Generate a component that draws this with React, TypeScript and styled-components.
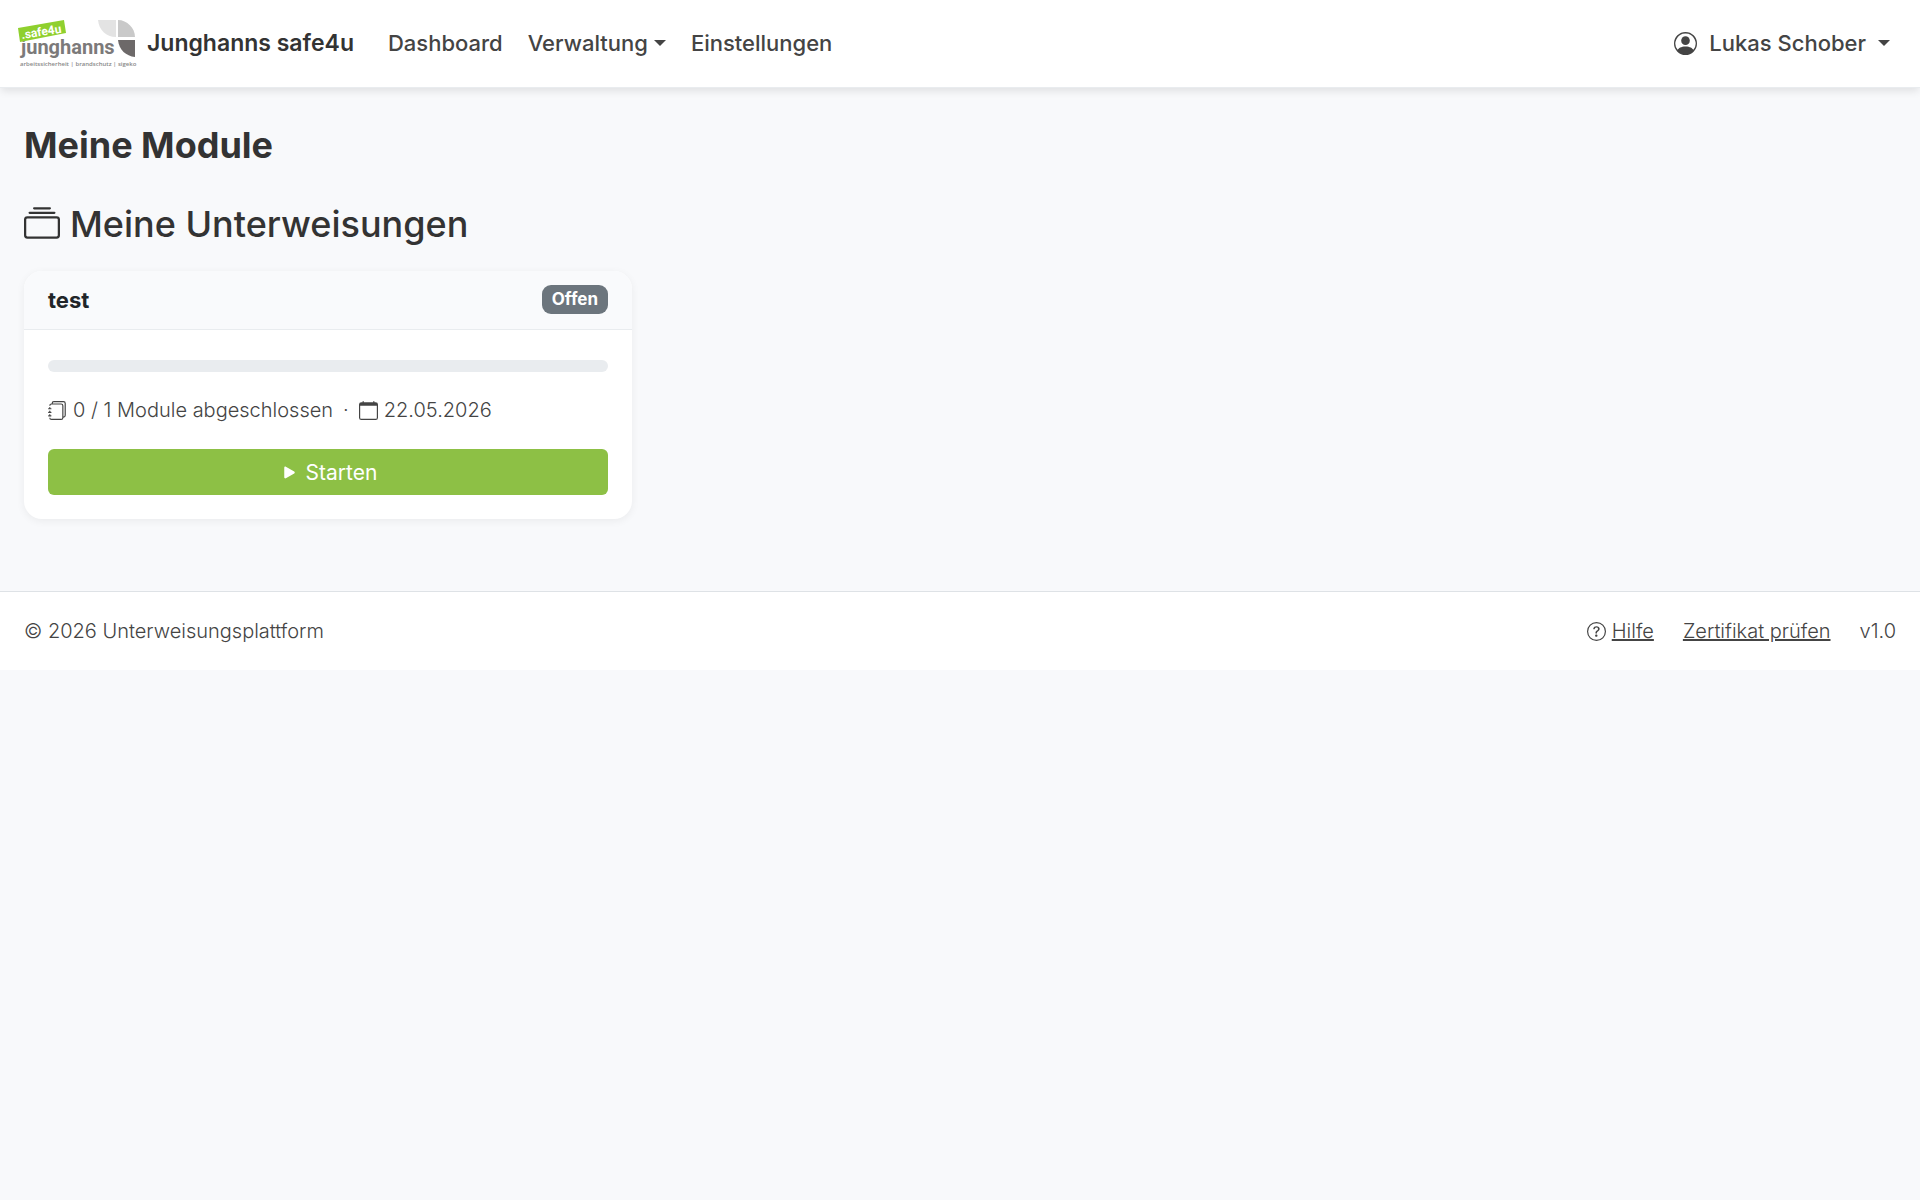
import React from "react";
import styled, { createGlobalStyle } from "styled-components";
import {
  BsCalendar,
  BsCollection,
  BsJournals,
  BsPersonCircle,
  BsPlayFill,
  BsQuestionCircle,
} from "react-icons/bs";

const GlobalStyle = createGlobalStyle`
  *, *::before, *::after { box-sizing: border-box; }
  body {
    margin: 0;
    background: #f8f9fb;
    color: #212529;
    font-family: Inter, "Liberation Sans", sans-serif;
    font-size: 22px;
    line-height: 33px;
  }
`;

const Navbar = styled.header`
  display: flex;
  align-items: center;
  justify-content: space-between;
  min-height: 88px;
  padding: 0 30px 0 18px;
  background: #fff;
  border-bottom: 1px solid #e9ecef;
  box-shadow: 0 4px 8px -1px rgba(0, 0, 0, 0.1);
`;

const NavGroup = styled.div`
  display: flex;
  align-items: center;
  gap: 34px;
`;

const Brand = styled.a`
  display: flex;
  align-items: center;
  gap: 11px;
  color: #333;
  font-size: 23px;
  font-weight: 600;
  text-decoration: none;
`;

const Logo = styled.svg`
  display: block;
  width: 118px;
  height: 50px;
  overflow: visible;
`;

const NavLinks = styled.nav`
  display: flex;
  align-items: center;
  gap: 25px;
`;

const NavLink = styled.a`
  color: #444;
  font-weight: 500;
  text-decoration: none;
`;

const NavToggle = styled.button<{ $gap: number }>`
  display: flex;
  align-items: center;
  gap: ${({ $gap }) => $gap}px;
  padding: 0;
  border: 0;
  background: none;
  color: #444;
  font: inherit;
  font-weight: 500;
  cursor: pointer;
`;

const Caret = styled.span`
  border-top: 6px solid currentColor;
  border-right: 6px solid transparent;
  border-left: 6px solid transparent;
  margin-bottom: 2px;
`;

const Main = styled.main`
  padding: 36px 24px 72px;
`;

const PageTitle = styled.h1`
  margin: 0 0 36px;
  color: #333;
  font-size: 36px;
  font-weight: 700;
  line-height: 43px;
`;

const SectionTitle = styled.h2`
  display: flex;
  align-items: center;
  gap: 10px;
  margin: 0 0 25px;
  color: #333;
  font-size: 36px;
  font-weight: 500;
  line-height: 43px;

  svg {
    margin-bottom: 2px;
  }
`;

const CardGrid = styled.div`
  display: grid;
  grid-template-columns: repeat(3, 1fr);
  gap: 24px;
`;

const Card = styled.article`
  overflow: hidden;
  border-radius: 18px;
  background: #fff;
  box-shadow: 0 2px 8px rgba(0, 0, 0, 0.06);
`;

const CardHeader = styled.div`
  display: flex;
  align-items: center;
  justify-content: space-between;
  height: 59px;
  padding: 0 24px;
  border-bottom: 1px solid #e9ecef;
  background: #f9fafc;
`;

const CardTitle = styled.h3`
  margin: 0;
  color: #212529;
  font-size: 22px;
  font-weight: 700;
  line-height: 33px;
`;

const Badge = styled.span`
  padding: 6px 10px;
  margin-bottom: 1px;
  border-radius: 9px;
  background: #6c757d;
  color: #fff;
  font-size: 17px;
  font-weight: 700;
  line-height: 17px;
`;

const CardBody = styled.div`
  display: flex;
  flex-direction: column;
  gap: 24px;
  padding: 30px 24px 24px;
`;

const Progress = styled.div`
  height: 12px;
  border-radius: 6px;
  background: #e9ecef;
`;

const Meta = styled.div`
  display: flex;
  align-items: center;
  gap: 10px;
  color: #444;
  font-size: 20px;
  font-weight: 300;
  line-height: 29px;
`;

const IconText = styled.span`
  display: inline-flex;
  align-items: center;
  gap: 6px;
`;

const StartButton = styled.button`
  display: flex;
  align-items: center;
  justify-content: center;
  gap: 6px;
  padding: 7px 12px 6px;
  border: 0;
  border-radius: 6px;
  background: #8dc045;
  color: #fff;
  font: inherit;
  font-size: 21px;
  line-height: 33px;
  cursor: pointer;
`;

const Footer = styled.footer`
  display: flex;
  align-items: center;
  justify-content: space-between;
  min-height: 79px;
  padding: 0 24px;
  border-top: 1px solid #dee2e6;
  background: #fff;
  color: #444;
  font-size: 20px;
  font-weight: 300;
  line-height: 29px;
`;

const FooterLinks = styled.div`
  display: flex;
  align-items: center;
  gap: 29px;
`;

const FooterLink = styled.a`
  color: inherit;
`;

const LogoText = styled.text<{ $size: number; $weight: number }>`
  font-family: Roboto, "Noto Sans", sans-serif;
  font-size: ${({ $size }) => $size}px;
  font-weight: ${({ $weight }) => $weight};
`;

const LogoTagline = styled.text`
  font-family: "Open Sans", "Noto Sans", sans-serif;
  font-size: 6px;
  font-weight: 600;
`;

function JunghannsLogo() {
  return (
    <Logo viewBox="0 0 118 50" role="img" aria-label="Junghanns Logo">
      <path d="M80 1H98V18C88 18 81 11 80 1Z" fill="#e3e3e3" />
      <path d="M100 1C109 1 117 9 117 18H100Z" fill="#c9c9c9" />
      <path d="M100 21H117V38C108 37 101 31 100 21Z" fill="#6d6969" />
      <LogoText $size={20} $weight={700} x="3" y="35" fill="#7c7a7a">junghanns</LogoText>
      <path d="M0 9L46 1L48 14L2 23Z" fill="#8fd02e" />
      <g transform="rotate(-9 4 20)">
        <LogoText $size={12} $weight={700} x="4" y="20" fill="#fff">.safe4u</LogoText>
      </g>
      <LogoTagline x="2" y="47" fill="#888">arbeitssicherheit | brandschutz | sigeko</LogoTagline>
    </Logo>
  );
}

export default function App() {
  return (
    <>
      <GlobalStyle />
      <Navbar>
        <NavGroup>
          <Brand href="#">
            <JunghannsLogo />
            Junghanns safe4u
          </Brand>
          <NavLinks>
            <NavLink href="#">Dashboard</NavLink>
            <NavToggle type="button" $gap={6}>
              Verwaltung
              <Caret />
            </NavToggle>
            <NavLink href="#">Einstellungen</NavLink>
          </NavLinks>
        </NavGroup>
        <NavToggle type="button" $gap={12}>
          <BsPersonCircle size={23} />
          Lukas Schober
          <Caret />
        </NavToggle>
      </Navbar>
      <Main>
        <PageTitle>Meine Module</PageTitle>
        <SectionTitle>
          <BsCollection size={36} />
          Meine Unterweisungen
        </SectionTitle>
        <CardGrid>
          <Card>
            <CardHeader>
              <CardTitle>test</CardTitle>
              <Badge>Offen</Badge>
            </CardHeader>
            <CardBody>
              <Progress
                role="progressbar"
                aria-label="Fortschritt"
                aria-valuemin={0}
                aria-valuemax={1}
                aria-valuenow={0}
              />
              <Meta>
                <IconText>
                  <BsJournals size={19} />
                  0 / 1 Module abgeschlossen
                </IconText>
                <span>·</span>
                <IconText>
                  <BsCalendar size={19} />
                  22.05.2026
                </IconText>
              </Meta>
              <StartButton type="button">
                <BsPlayFill size={21} />
                Starten
              </StartButton>
            </CardBody>
          </Card>
        </CardGrid>
      </Main>
      <Footer>
        <span>© 2026 Unterweisungsplattform</span>
        <FooterLinks>
          <IconText>
            <BsQuestionCircle size={19} />
            <FooterLink href="#">Hilfe</FooterLink>
          </IconText>
          <FooterLink href="#">Zertifikat prüfen</FooterLink>
          <span>v1.0</span>
        </FooterLinks>
      </Footer>
    </>
  );
}
